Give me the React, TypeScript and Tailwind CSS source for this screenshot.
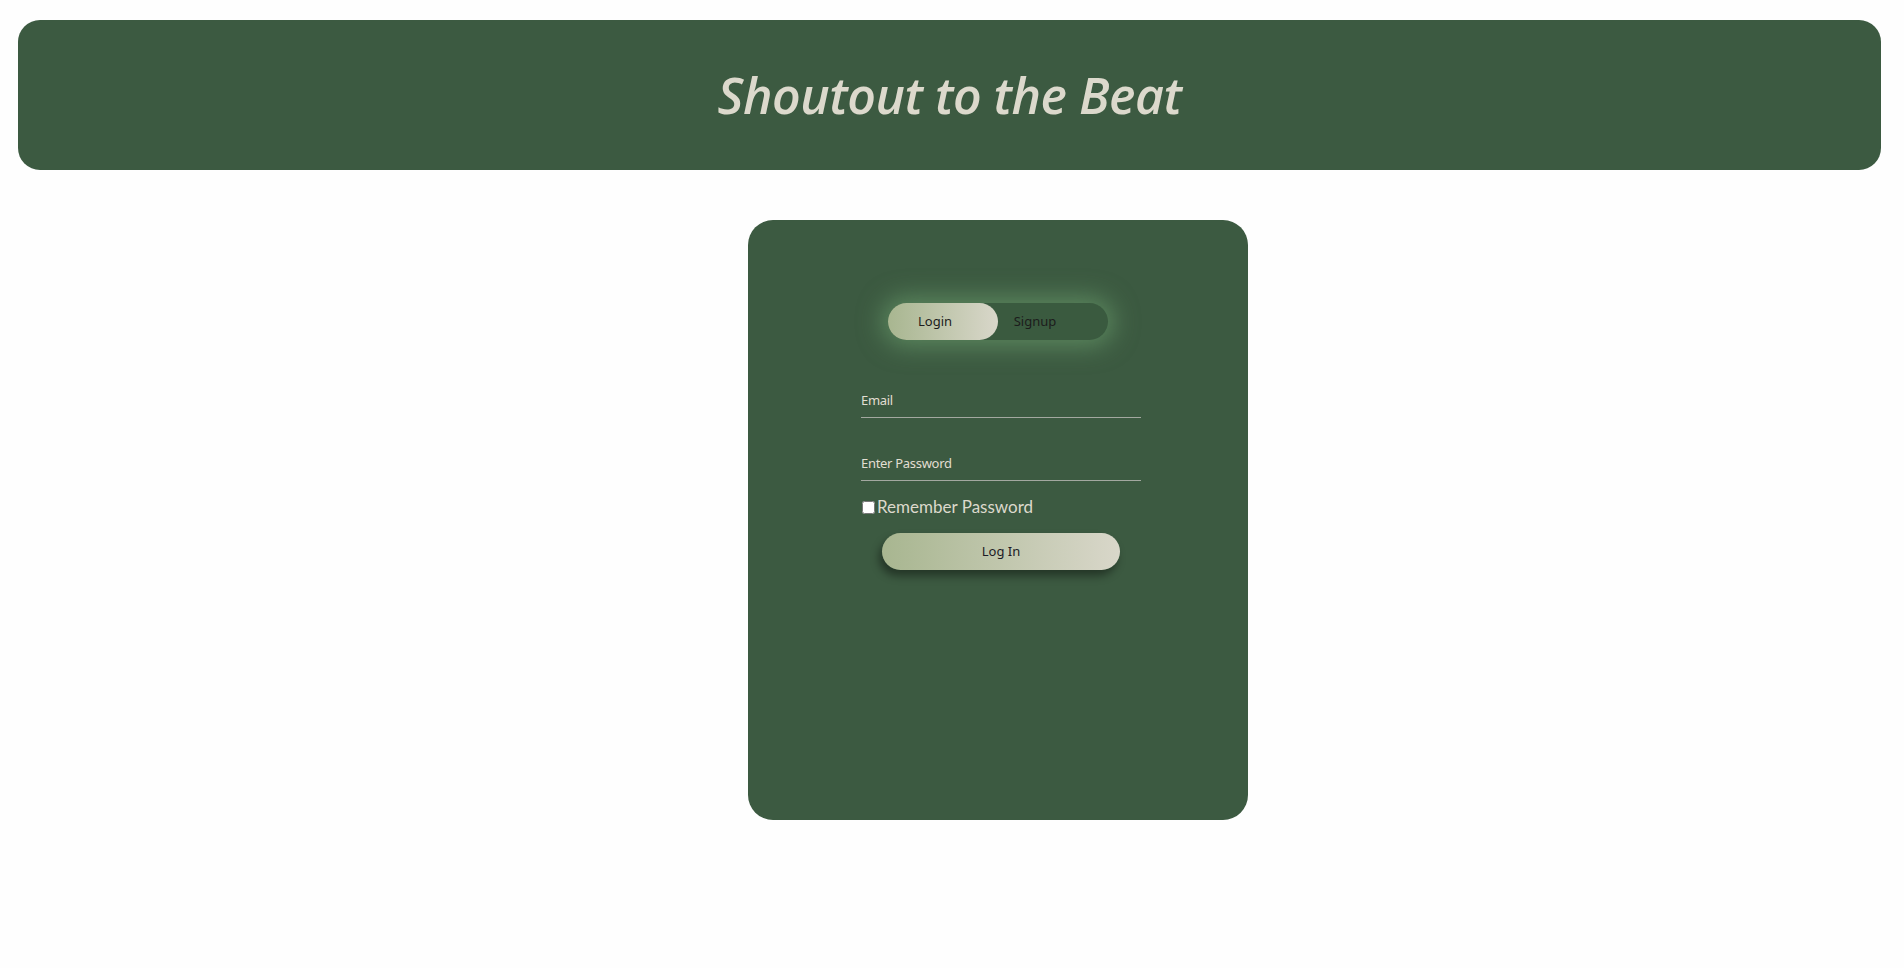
import { FC, useState } from "react";
import clsx from "clsx";

const AuthToggle: FC<{ mode: "login" | "signup"; onChange: (m: "login" | "signup") => void }> = ({
  mode,
  onChange,
}) => {
  return (
    <div className="relative w-[220px] h-[37px] rounded-full bg-[#3a5a3f] shadow-[0_0_24px_6px_rgba(112,165,114,0.6)] flex">
      {/* sliding pill */}
      <div
        className={clsx(
          "absolute top-0 h-[37px] w-[110px] rounded-full bg-gradient-to-r from-[#a8b690] to-[#d9d7ca]",
          mode === "login" ? "left-0" : "left-[110px]"
        )}
      />
      <button
        onClick={() => onChange("login")}
        className="relative w-[94px] h-full text-[13px] text-[#1c1c1c] font-['Noto_Sans',sans-serif]"
      >
        Login
      </button>
      <button
        onClick={() => onChange("signup")}
        className="relative w-[106px] h-full text-[13px] text-[#1c1c1c] font-['Noto_Sans',sans-serif]"
      >
        Signup
      </button>
    </div>
  );
};

const Field: FC<{ label: string; type?: string; className?: string }> = ({ label, type = "text", className }) => (
  <div className={clsx("w-[280px] border-b border-[#a3a8a0] pb-[8px]", className)}>
    <input
      type={type}
      placeholder={label}
      className="block w-full bg-transparent outline-none text-[13px] tracking-[-0.3px] leading-[18px] h-[18px] text-[#e2ded2] placeholder:text-[#e2ded2] font-['Noto_Sans',sans-serif]"
    />
  </div>
);

export default function App() {
  const [mode, setMode] = useState<"login" | "signup">("login");
  const [remember, setRemember] = useState(false);

  return (
    <div className="min-h-screen bg-[#fefefe] pt-[20px]">
      {/* Header */}
      <header className="ml-[18px] mr-[23px] h-[150px] rounded-[22px] bg-[#3c5a41] flex items-center justify-center">
        <h1 className="italic font-semibold text-[50px] leading-none text-[#dcd9cc] font-['Open_Sans',sans-serif] tracking-[-0.5px]">
          Shoutout to the Beat
        </h1>
      </header>

      {/* Card */}
      <div className="mt-[50px] ml-[748px] w-[500px] h-[600px] rounded-[25px] bg-[#3c5a41] flex flex-col items-center pt-[83px]">
        <AuthToggle mode={mode} onChange={setMode} />

        <div className="ml-[6px] w-[280px] flex flex-col mt-[51px]">
          <Field label="Email" type="email" />
          <Field label="Enter Password" type="password" className="mt-[36px]" />

          <label className="mt-[14px] h-[24px] flex items-center text-[17px] text-[#dcd9cc] font-['Lato',sans-serif]">
            <input
              type="checkbox"
              checked={remember}
              onChange={(e) => setRemember(e.target.checked)}
              className="ml-[1px] mr-[2px] w-[13px] h-[13px]"
            />
            Remember Password
          </label>

          <button className="mt-[14px] ml-[21px] w-[238px] h-[37px] rounded-full bg-gradient-to-r from-[#a8b690] to-[#d9d7ca] text-[13px] text-[#1c1a26] font-['Noto_Sans',sans-serif] shadow-[-3px_6px_8px_rgba(0,0,0,0.4)]">
            Log In
          </button>
        </div>
      </div>
    </div>
  );
}
